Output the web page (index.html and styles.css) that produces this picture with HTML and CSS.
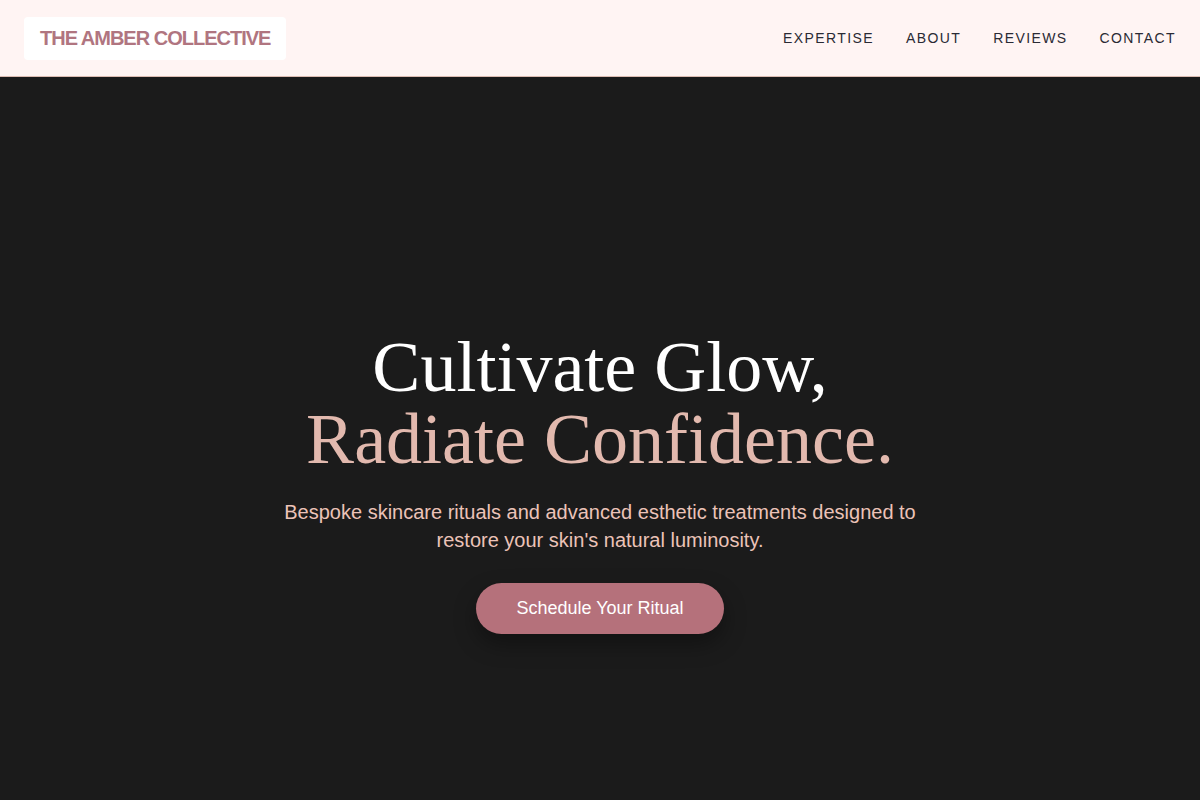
FILE: index.html
```html
<!DOCTYPE html>
<html lang="en">
<head>
<meta charset="utf-8">
<title>The Amber Collective</title>
<link rel="stylesheet" href="styles.css">
</head>
<body>
<header class="site-header">
  <a class="logo" href="#">THE AMBER COLLECTIVE</a>
  <nav class="nav">
    <a href="#">EXPERTISE</a>
    <a href="#">ABOUT</a>
    <a href="#">REVIEWS</a>
    <a href="#">CONTACT</a>
  </nav>
</header>
<main class="hero">
  <div class="hero-inner">
    <h1 class="hero-title"><span class="line-light">Cultivate Glow,</span><span class="line-accent">Radiate Confidence.</span></h1>
    <p class="hero-text">Bespoke skincare rituals and advanced esthetic treatments designed to restore your skin's natural luminosity.</p>
    <a class="cta" href="#">Schedule Your Ritual</a>
  </div>
</main>
</body>
</html>
```
FILE: styles.css
```css
* { box-sizing: border-box; }
html, body { margin: 0; padding: 0; }
body {
  background: #1b1b1b;
  font-family: "Liberation Sans", Arial, sans-serif;
  min-height: 100vh;
}
a { text-decoration: none; }

.site-header {
  height: 77px;
  display: flex;
  align-items: center;
  justify-content: space-between;
  padding: 0 24px;
  background: #fff4f3;
  border-bottom: 1px solid #dcbcb2;
}
.logo {
  display: block;
  background: #ffffff;
  border-radius: 4px;
  padding: 8px 16px;
  line-height: 27px;
  font-size: 20px;
  font-weight: 700;
  letter-spacing: -1px;
  color: #b07580;
}
.nav {
  display: flex;
  gap: 32px;
}
.nav a {
  font-size: 14px;
  letter-spacing: 0.1em;
  color: #2a2a34;
  line-height: 20px;
}

.hero {
  padding: 254px 24px 140px;
  display: flex;
  justify-content: center;
  background: #1b1b1b;
}
.hero-inner {
  max-width: 660px;
  display: flex;
  flex-direction: column;
  align-items: center;
  text-align: center;
}
.hero-title {
  margin: 0;
  font-family: "Liberation Serif", "Times New Roman", serif;
  font-weight: 400;
  font-size: 72px;
  line-height: 72px;
  white-space: nowrap;
}
.line-light { display: block; color: #ffffff; }
.line-accent { display: block; color: #e2b9ae; }
.hero-text {
  margin: 23px 0 0;
  font-size: 20px;
  line-height: 28px;
  color: #ecc3b8;
}
.cta {
  margin-top: 29px;
  display: inline-block;
  background: #b5717b;
  color: #ffffff;
  font-size: 18px;
  line-height: 21px;
  padding: 15px 40px;
  border-radius: 999px;
  box-shadow: 0 10px 22px rgba(0, 0, 0, 0.35);
}
```
